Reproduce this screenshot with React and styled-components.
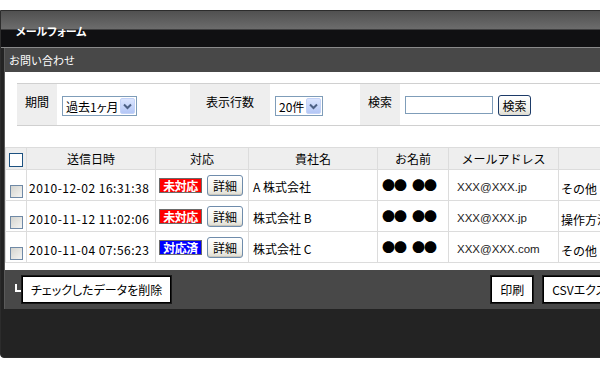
import styled, { createGlobalStyle } from 'styled-components';

const GlobalStyle = createGlobalStyle`
  body {
    margin: 0;
    background: #fff;
    font-family: "Noto Sans CJK JP", "DejaVu Sans", sans-serif;
    overflow: hidden;
  }
`;

const Page = styled.div`
  padding-top: 10px;
  width: 600px;
  overflow: hidden;
`;

const Window = styled.div`
  width: 700px;
  border: 1px solid #2c2c2c;
  border-radius: 0 0 0 4px;
  background: #232323;
  padding-bottom: 48px;
`;

const TitleBar = styled.div`
  height: 37px;
  border-bottom: 1px solid #8a8a8a;
  background: linear-gradient(to bottom, #505050 0, #6c6c6c 18px, #101012 19px, #101012 100%);
  color: #fff;
  font-weight: bold;
  font-size: 11px;
  line-height: 16px;
  padding: 12px 0 0 15px;
  box-sizing: border-box;
  font-feature-settings: "palt";
`;

const Main = styled.div`
  padding-left: 3px;
`;

const Panel = styled.div`
  border-left: 1px solid #5a5a5a;
`;

const SubHeader = styled.div`
  height: 24px;
  line-height: 24px;
  background: #484848;
  color: #fff;
  font-size: 11px;
  padding-left: 4px;
`;

const Content = styled.div`
  background: #fff;
  height: 198px;
  padding-top: 11px;
  box-sizing: border-box;
`;

const FilterBar = styled.div`
  display: flex;
  margin-left: 12px;
  height: 43px;
  box-sizing: border-box;
  border-top: 1px solid #d0d0d0;
  border-bottom: 1px solid #d0d0d0;
  font-size: 12px;
`;

const FilterLabel = styled.div`
  width: ${(p) => p.$w}px;
  background: #eeeeee;
  text-align: center;
  line-height: 16px;
  padding-top: 10px;
  color: #000;
`;

const FilterValue = styled.div`
  width: ${(p) => p.$w}px;
  display: flex;
  align-items: flex-start;
  gap: 5px;
  padding: 12px 0 0 5px;
  box-sizing: border-box;
`;

const FakeSelect = styled.div`
  width: ${(p) => p.$w}px;
  height: 20px;
  box-sizing: border-box;
  border: 1px solid #7f9db9;
  display: flex;
  align-items: center;
  padding-left: 3px;
  font-size: 12px;
  white-space: nowrap;
  font-feature-settings: "palt";
  background: #fff;
`;

const SelectArrow = styled.span`
  margin-left: auto;
  margin-right: 1px;
  flex: none;
  width: 15px;
  height: 16px;
  border-radius: 2px;
  background: linear-gradient(to bottom, #dbe5fe, #b4c7f6);
  border: 1px solid #c3d2f7;
  box-sizing: border-box;
  display: flex;
  align-items: center;
  justify-content: center;
`;

const TextInput = styled.div`
  width: 88px;
  height: 18px;
  box-sizing: border-box;
  border: 1px solid #7f9db9;
  background: #fff;
`;

const SmallButton = styled.button`
  height: 21px;
  width: ${(p) => p.$w}px;
  margin-top: ${(p) => p.$top || 0}px;
  padding: 0;
  box-sizing: border-box;
  border: 1px solid ${(p) => p.$border || '#1d3b68'};
  border-radius: 3px;
  background: linear-gradient(to bottom, #ffffff, #f0f0ea 70%, #dedbd0);
  font-family: "Noto Sans CJK JP", sans-serif;
  font-size: 12px;
  line-height: 19px;
  color: #000;
`;

const Table = styled.table`
  margin-top: 21px;
  border-collapse: collapse;
  table-layout: fixed;
  width: 690px;
  font-size: 12px;
`;

const Col = styled.col`
  width: ${(p) => p.$w}px;
`;

const Th = styled.th`
  height: 21px;
  padding: 0;
  background: #eeeeee;
  border: 1px solid #dcdcdc;
  font-weight: normal;
  text-align: center;
  color: #000;
`;

const Td = styled.td`
  height: ${(p) => 30 - (p.$pt || 0)}px;
  padding: ${(p) => p.$pt || 0}px 0 0 ${(p) => p.$pl || 0}px;
  border: 1px solid #dcdcdc;
  vertical-align: middle;
  white-space: nowrap;
  overflow: hidden;
  text-align: ${(p) => p.$align || 'left'};
  line-height: 16px;
  color: #000;
`;

const Check = styled.span`
  display: inline-block;
  vertical-align: middle;
  width: ${(p) => (p.$head ? 14 : 13)}px;
  height: ${(p) => (p.$head ? 14 : 13)}px;
  box-sizing: border-box;
  border: 1px solid ${(p) => (p.$head ? '#1c5180' : '#6f89a6')};
  background: ${(p) =>
    p.$head ? '#fff' : 'linear-gradient(135deg, #d4d4cf, #f4f4f2)'};
`;

const DateText = styled.span`
  letter-spacing: 0.5px;
`;

const Status = styled.span`
  display: inline-block;
  vertical-align: middle;
  width: 43px;
  height: 15px;
  box-sizing: border-box;
  border: 1px solid #6a6a6a;
  background: ${(p) => (p.$done ? '#0000ff' : '#ff0000')};
  color: #fff;
  font-weight: bold;
  font-size: 12px;
  line-height: 13px;
  text-align: center;
  letter-spacing: -0.5px;
`;

const DetailButton = styled(SmallButton)`
  vertical-align: middle;
  margin-left: 5px;
  width: 36px;
  border-color: #6f8cab;
  box-shadow: inset 0 -1px 0 #c9c6bc;
`;

const Email = styled.span`
  font-family: "Liberation Sans", sans-serif;
  font-size: 11.5px;
  color: #222;
`;

const Dots = styled.span`
  font-size: 13px;
  letter-spacing: -1px;
  word-spacing: 4px;
`;

const Footer = styled.div`
  height: 39px;
  background: #484848;
  display: flex;
  align-items: flex-start;
  padding: 6px 0 0 10px;
  box-sizing: border-box;
`;

const Corner = styled.span`
  width: 5px;
  height: 6px;
  margin-top: 8px;
  border-left: 2px solid #fff;
  border-bottom: 2px solid #fff;
`;

const BarButton = styled.button`
  height: 27px;
  margin-left: ${(p) => p.$ml || 0}px;
  padding: 0 ${(p) => p.$px || 8}px;
  box-sizing: border-box;
  border: 1px solid #000;
  box-shadow: 0 0 0 1px #1a1a1a;
  background: #fff;
  font-family: "Noto Sans CJK JP", sans-serif;
  font-size: 12px;
  font-feature-settings: "palt";
  color: #000;
`;

const Chevron = () => (
  <svg width="9" height="7" viewBox="0 0 9 7">
    <path d="M1 1.5 L4.5 5 L8 1.5" fill="none" stroke="#4d6185" strokeWidth="2" />
  </svg>
);

const rows = [
  { date: '2010-12-02 16:31:38', done: false, company: 'A 株式会社', email: 'XXX@XXX.jp', kind: 'その他' },
  { date: '2010-11-12 11:02:06', done: false, company: '株式会社 B', email: 'XXX@XXX.jp', kind: '操作方法' },
  { date: '2010-11-04 07:56:23', done: true, company: '株式会社 C', email: 'XXX@XXX.com', kind: 'その他' },
];

const App = () => (
  <Page>
    <GlobalStyle />
    <Window>
      <TitleBar>メールフォーム</TitleBar>
      <Main>
        <Panel>
          <SubHeader>お問い合わせ</SubHeader>
          <Content>
            <FilterBar>
              <FilterLabel $w={40}>期間</FilterLabel>
              <FilterValue $w={133}>
                <FakeSelect $w={75}>
                  過去1ヶ月
                  <SelectArrow><Chevron /></SelectArrow>
                </FakeSelect>
              </FilterValue>
              <FilterLabel $w={80}>表示行数</FilterLabel>
              <FilterValue $w={90}>
                <FakeSelect $w={48}>
                  20件
                  <SelectArrow><Chevron /></SelectArrow>
                </FakeSelect>
              </FilterValue>
              <FilterLabel $w={40}>検索</FilterLabel>
              <FilterValue $w={290}>
                <TextInput />
                <SmallButton $w={33} $top={-1}>検索</SmallButton>
              </FilterValue>
            </FilterBar>
            <Table>
              <colgroup>
                <Col $w={21} />
                <Col $w={129} />
                <Col $w={93} />
                <Col $w={129} />
                <Col $w={71} />
                <Col $w={110} />
                <Col $w={137} />
              </colgroup>
              <thead>
                <tr>
                  <Th><Check $head /></Th>
                  <Th>送信日時</Th>
                  <Th>対応</Th>
                  <Th>貴社名</Th>
                  <Th>お名前</Th>
                  <Th>メールアドレス</Th>
                  <Th>種別</Th>
                </tr>
              </thead>
              <tbody>
                {rows.map((r) => (
                  <tr key={r.date}>
                    <Td $align="center" $pt={9}><Check /></Td>
                    <Td $pl={2} $pt={6}><DateText>{r.date}</DateText></Td>
                    <Td $pl={3}>
                      <Status $done={r.done}>{r.done ? '対応済' : '未対応'}</Status>
                      <DetailButton>詳細</DetailButton>
                    </Td>
                    <Td $pl={4} $pt={3}>{r.company}</Td>
                    <Td $pl={4}><Dots>●● ●●</Dots></Td>
                    <Td $pl={8} $pt={3}><Email>{r.email}</Email></Td>
                    <Td $pl={2} $pt={7}>{r.kind}</Td>
                  </tr>
                ))}
              </tbody>
            </Table>
          </Content>
          <Footer>
            <Corner />
            <BarButton>チェックしたデータを削除</BarButton>
            <BarButton $ml={320} $px={8}>印刷</BarButton>
            <BarButton $ml={10} $px={8}>CSVエクスポート</BarButton>
          </Footer>
        </Panel>
      </Main>
    </Window>
  </Page>
);

export default App;
